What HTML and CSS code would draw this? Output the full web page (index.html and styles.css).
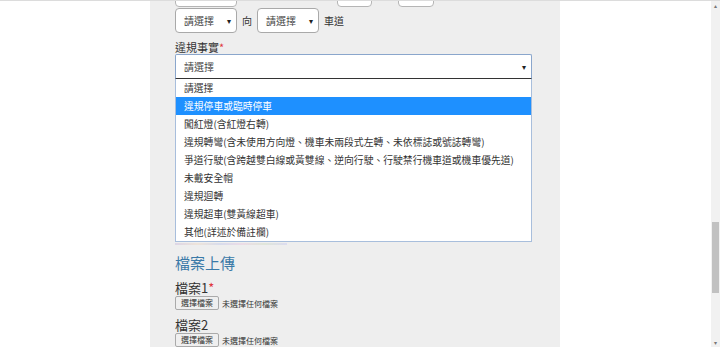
FILE: index.html
```html
<!DOCTYPE html>
<html>
<head>
  <meta charset="utf-8" />
  <meta name="viewport" content="width=device-width" />
  <title>違規檢舉</title>
  <link rel="stylesheet" href="styles.css">
</head>

<body>
  <div class="page">
    <div class="side-left"></div>

    <div class="report-panel">
      <div class="cut-row">
        <div class="cut-box cut-wide"></div>
        <div class="cut-gap"></div>
        <div class="cut-box cut-small"></div>
        <div class="cut-box cut-small second"></div>
      </div>

      <div class="direction-row">
        <div class="small-select">請選擇 <span class="arrow">&#9662;</span></div>
        <span class="direction-word">向</span>
        <div class="small-select">請選擇 <span class="arrow">&#9662;</span></div>
        <span class="direction-word">車道</span>
      </div>

      <div class="field-label">違規事實<span class="required">*</span></div>

      <div class="fact-field">
        <div class="big-select">請選擇 <span class="arrow">&#9662;</span></div>

        <ul class="option-list">
          <li>請選擇</li>
          <li class="is-active">違規停車或臨時停車</li>
          <li>闖紅燈(含紅燈右轉)</li>
          <li>違規轉彎(含未使用方向燈、機車未兩段式左轉、未依標誌或號誌轉彎)</li>
          <li>爭道行駛(含跨越雙白線或黃雙線、逆向行駛、行駛禁行機車道或機車優先道)</li>
          <li>未戴安全帽</li>
          <li>違規迴轉</li>
          <li>違規超車(雙黃線超車)</li>
          <li>其他(詳述於備註欄)</li>
        </ul>

        <div class="hidden-under">
          <div class="photo-strip"></div>
        </div>
      </div>

      <h2 class="section-title">檔案上傳</h2>

      <div class="upload-label">檔案1<span class="required">*</span></div>
      <div class="upload-row">
        <button type="button" class="file-button">選擇檔案</button>
        <span class="file-status">未選擇任何檔案</span>
      </div>

      <div class="upload-label second">檔案2</div>
      <div class="upload-row">
        <button type="button" class="file-button">選擇檔案</button>
        <span class="file-status">未選擇任何檔案</span>
      </div>
    </div>

    <div class="side-right"></div>

    <div class="scrollbar">
      <span class="scroll-arrow">&#9652;</span>
      <div class="scroll-track">
        <div class="scroll-thumb"></div>
      </div>
      <span class="scroll-arrow">&#9662;</span>
    </div>
  </div>
</body>
</html>
```

FILE: styles.css
```css
html, body {
  margin: 0;
  height: 100%;
  overflow: hidden;
}

body {
  background-color: white;
  color: #333;
  font-family: "Noto Sans CJK TC", "Liberation Sans", sans-serif;
}

.page {
  display: flex;
  height: 347px;
  border-top: 1px solid #dcdcdc;
  box-sizing: border-box;
}

.side-left {
  width: 150px;
  background-color: #fff;
}

.report-panel {
  width: 385px;
  padding-left: 25px;
  background-color: #eeeeee;
}

.side-right {
  flex: 1;
  background-color: #fff;
}

/* top row, scrolled mostly out of view */
.cut-row {
  display: flex;
  align-items: flex-end;
  height: 6px;
  overflow: hidden;
}

.cut-box {
  flex: none;
  height: 24px;
  background: #fff;
  border: 1px solid #b5b5b5;
  border-radius: 4px;
  box-sizing: border-box;
}

.cut-wide { width: 62px; }
.cut-gap { width: 100px; }
.cut-small { width: 35px; }
.cut-small.second { width: 36px; margin-left: 26px; }

.direction-row {
  display: flex;
  align-items: center;
  margin-top: 1px;
  height: 25px;
  font-size: 10px;
}

.small-select {
  display: flex;
  align-items: center;
  justify-content: space-between;
  width: 62px;
  height: 25px;
  padding: 0 5px 0 8px;
  box-sizing: border-box;
  background: #fff;
  border: 1px solid #a9a9a9;
  border-radius: 4px;
  color: #444;
}

.arrow {
  font-size: 8px;
  color: #222;
}

.direction-word {
  margin: 0 5px;
  color: #333;
}

.field-label {
  margin-top: 8px;
  font-size: 11px;
  line-height: 13px;
  color: #333;
}

.required {
  color: #e0383e;
}

.fact-field {
  position: relative;
}

.big-select {
  display: flex;
  align-items: center;
  justify-content: space-between;
  width: 357px;
  height: 25px;
  padding: 0 5px 0 8px;
  box-sizing: border-box;
  background: #fff;
  border: 1px solid #8aa6cc;
  border-bottom-color: #333;
  border-radius: 2px 2px 0 0;
  font-size: 10px;
  color: #444;
}

.option-list {
  position: absolute;
  top: 25px;
  left: 0;
  z-index: 2;
  width: 357px;
  margin: 0;
  padding: 0;
  list-style: none;
  background: #fff;
  border: 1px solid #a8bedc;
  border-top: none;
  box-sizing: border-box;
}

.option-list li {
  height: 18px;
  line-height: 18px;
  padding-left: 8px;
  font-size: 9.8px;
  color: #333;
  white-space: nowrap;
}

.option-list li.is-active {
  background-color: #1e90ff;
  color: #fff;
}

.hidden-under {
  height: 166px;
  display: flex;
  align-items: flex-end;
}

.photo-strip {
  width: 112px;
  height: 2px;
  background: linear-gradient(90deg, #ddd6e6, #eee4da, #d8dcec, #ecdce6, #e0e6da, #dcdcf0);
}

.section-title {
  margin: 8px 0 0;
  font-size: 15px;
  line-height: 20px;
  font-weight: normal;
  color: #3b7aa8;
}

.upload-label {
  margin-top: 7px;
  font-size: 13px;
  line-height: 16px;
  color: #333;
}

.upload-label.second {
  margin-top: 7px;
}

.upload-row {
  display: flex;
  align-items: center;
  height: 14px;
}

.file-button {
  height: 14px;
  padding: 0 5px;
  font-family: inherit;
  font-size: 8px;
  line-height: 12px;
  color: #333;
  background: #efefef;
  border: 1px solid #aaa;
  border-radius: 2px;
}

.file-status {
  margin-left: 3px;
  font-size: 8px;
  color: #333;
}

.scrollbar {
  display: flex;
  flex-direction: column;
  align-items: center;
  width: 9px;
  background: #f1f1f1;
}

.scroll-arrow {
  height: 9px;
  font-size: 6px;
  line-height: 9px;
  color: #777;
}

.scroll-track {
  flex: 1;
  width: 100%;
  position: relative;
}

.scroll-thumb {
  position: absolute;
  top: 212px;
  left: 1px;
  right: 1px;
  height: 71px;
  background: #c1c1c1;
}
```
